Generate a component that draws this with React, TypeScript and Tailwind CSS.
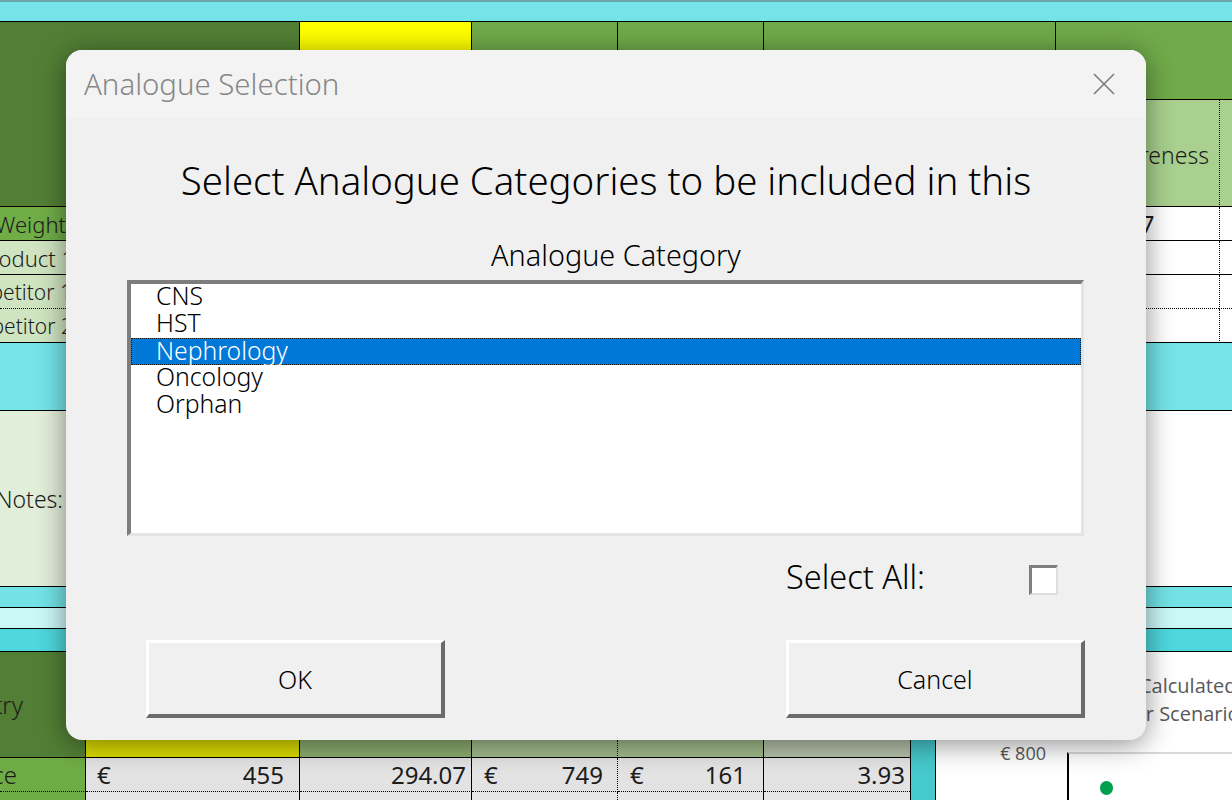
import React from "react";

type CellProps = { className: string; children?: React.ReactNode };

// One spreadsheet cell placed on the sheet grid
function Cell({ className, children }: CellProps) {
  return (
    <div className={"flex items-center overflow-hidden whitespace-nowrap " + className}>
      {children}
    </div>
  );
}

function Sheet() {
  return (
    <div className="grid h-[800px] w-[1232px] grid-cols-[86px_214px_172px_146px_146px_146px_26px_120px_163px_13px] grid-rows-[22px_78px_107px_34px_34px_34px_34px_68px_176px_21px_21px_23px_88px_18px_34px_8px] overflow-hidden text-[24px] leading-[28px] text-[#1c1c1c]">
      {/* top band */}
      <Cell className="col-start-1 col-end-11 row-start-1 row-end-2 border-t-2 border-b border-t-[#6aa6aa] border-b-black bg-[#74e4e8]" />

      {/* header rows */}
      <Cell className="col-start-1 col-end-3 row-start-2 row-end-4 border-r border-b border-black bg-[#527f35]" />
      <Cell className="col-start-3 col-end-4 row-start-2 row-end-3 border-r border-black bg-[#ffff00]" />
      <Cell className="col-start-4 col-end-5 row-start-2 row-end-3 border-r border-black bg-[#70aa4a]" />
      <Cell className="col-start-5 col-end-6 row-start-2 row-end-3 border-r border-black bg-[#70aa4a]" />
      <Cell className="col-start-6 col-end-9 row-start-2 row-end-3 border-r border-black bg-[#70aa4a]" />
      <Cell className="col-start-9 col-end-11 row-start-2 row-end-3 border-b border-black bg-[#70aa4a]" />
      <Cell className="col-start-3 col-end-9 row-start-3 row-end-4 border-b border-black bg-[#a9d08e]" />
      <Cell className="col-start-9 col-end-10 row-start-3 row-end-4 justify-end border-b border-black bg-[#a9d08e] pt-[4px] pr-[10px] text-[23px] font-light">
        Awareness
      </Cell>
      <Cell className="col-start-10 col-end-11 row-start-3 row-end-4 border-b border-l border-black bg-[#a9d08e] [border-left-style:dotted]" />

      {/* weight rows */}
      <Cell className="col-start-1 col-end-2 row-start-4 row-end-5 justify-end border-r border-b border-black bg-[#70ad47] pr-[19px] text-[22px] font-light">
        Weight
      </Cell>
      <Cell className="col-start-2 col-end-9 row-start-4 row-end-5 border-b border-black bg-white" />
      <Cell className="col-start-9 col-end-10 row-start-4 row-end-5 justify-center border-b border-black bg-white">
        0.7
      </Cell>
      <Cell className="col-start-10 col-end-11 row-start-4 row-end-5 border-b border-l border-black bg-white [border-left-style:dotted]" />

      <Cell className="col-start-1 col-end-2 row-start-5 row-end-6 justify-end border-r border-b border-black bg-[#cfe4c1] pr-[11px] text-[22px] font-light">
        Product 1
      </Cell>
      <Cell className="col-start-2 col-end-10 row-start-5 row-end-6 border-b border-black bg-white" />
      <Cell className="col-start-10 col-end-11 row-start-5 row-end-6 border-b border-l border-black bg-white [border-left-style:dotted]" />

      <Cell className="col-start-1 col-end-2 row-start-6 row-end-7 justify-end border-r border-b border-black bg-[#cfe4c1] pr-[13px] text-[21px] font-light [border-bottom-style:dotted]">
        Competitor 1
      </Cell>
      <Cell className="col-start-2 col-end-10 row-start-6 row-end-7 border-b border-dotted border-black bg-white" />
      <Cell className="col-start-10 col-end-11 row-start-6 row-end-7 border-b border-l border-dotted border-black bg-white" />

      <Cell className="col-start-1 col-end-2 row-start-7 row-end-8 justify-end border-r border-b border-black bg-[#cfe4c1] pr-[12px] text-[21px] font-light">
        Competitor 2
      </Cell>
      <Cell className="col-start-2 col-end-10 row-start-7 row-end-8 border-b border-black bg-white" />
      <Cell className="col-start-10 col-end-11 row-start-7 row-end-8 border-b border-l border-black bg-white [border-left-style:dotted]" />

      {/* separator and notes */}
      <Cell className="col-start-1 col-end-11 row-start-8 row-end-9 border-b border-black bg-[#74e4e8]" />
      <Cell className="col-start-1 col-end-2 row-start-9 row-end-10 justify-end border-r border-b border-black bg-[#e1eed9] pr-[22px] text-[23px] font-light">
        Notes:
      </Cell>
      <Cell className="col-start-2 col-end-11 row-start-9 row-end-10 border-b border-black bg-white" />
      <Cell className="col-start-1 col-end-11 row-start-10 row-end-11 border-b border-black bg-[#72e2e6]" />
      <Cell className="col-start-1 col-end-11 row-start-11 row-end-12 border-b border-black bg-[#cbf7f7]" />
      <Cell className="col-start-1 col-end-11 row-start-12 row-end-13 border-b border-black bg-[#4ed7dc]" />

      {/* price table */}
      <Cell className="col-start-1 col-end-2 row-start-13 row-end-15 justify-end border-r border-b border-black bg-[#527f35] pr-[62px] font-light">
        Country
      </Cell>
      <Cell className="col-start-2 col-end-7 row-start-13 row-end-14 bg-[#f2f2f2]" />
      <Cell className="col-start-7 col-end-8 row-start-13 row-end-17 border-r border-l border-black bg-[#46c9cd]" />

      <Cell className="col-start-2 col-end-3 row-start-14 row-end-15 border-r border-b border-black bg-[#dcdc00]" />
      <Cell className="col-start-3 col-end-4 row-start-14 row-end-15 border-r border-b border-black bg-[#8cad6f]" />
      <Cell className="col-start-4 col-end-5 row-start-14 row-end-15 border-r border-b border-black bg-[#a2bc8d] [border-right-style:dotted]" />
      <Cell className="col-start-5 col-end-6 row-start-14 row-end-15 border-r border-b border-black bg-[#a2bc8d]" />
      <Cell className="col-start-6 col-end-7 row-start-14 row-end-15 border-b border-black bg-[#b7c3ab]" />

      <Cell className="col-start-1 col-end-2 row-start-15 row-end-16 justify-end border-r border-b border-black bg-[#6fac46] pr-[68px] font-light [border-bottom-style:dotted]">
        Price
      </Cell>
      <Cell className="col-start-2 col-end-3 row-start-15 row-end-16 justify-between border-r border-b border-black bg-[#e3e3e3] pr-[15px] pl-[11px] [border-bottom-style:dotted]">
        <span>€</span>
        <span>455</span>
      </Cell>
      <Cell className="col-start-3 col-end-4 row-start-15 row-end-16 justify-end border-r border-b border-black bg-[#e3e3e3] pr-[5px] [border-bottom-style:dotted]">
        294.07
      </Cell>
      <Cell className="col-start-4 col-end-5 row-start-15 row-end-16 justify-between border-r border-b border-dotted border-black bg-[#e3e3e3] pr-[14px] pl-[12px]">
        <span>€</span>
        <span>749</span>
      </Cell>
      <Cell className="col-start-5 col-end-6 row-start-15 row-end-16 justify-between border-r border-b border-black bg-[#e3e3e3] pr-[17px] pl-[12px] [border-bottom-style:dotted]">
        <span>€</span>
        <span>161</span>
      </Cell>
      <Cell className="col-start-6 col-end-7 row-start-15 row-end-16 justify-end border-b border-black bg-[#e3e3e3] pr-[5px] [border-bottom-style:dotted]">
        3.93
      </Cell>

      <Cell className="col-start-1 col-end-2 row-start-16 row-end-17 border-r border-black bg-[#6fac46]" />
      <Cell className="col-start-2 col-end-3 row-start-16 row-end-17 border-r border-black bg-[#e6e6e6]" />
      <Cell className="col-start-3 col-end-4 row-start-16 row-end-17 border-r border-black bg-[#e6e6e6]" />
      <Cell className="col-start-4 col-end-5 row-start-16 row-end-17 border-r border-dotted border-black bg-[#e6e6e6]" />
      <Cell className="col-start-5 col-end-6 row-start-16 row-end-17 border-r border-black bg-[#e6e6e6]" />
      <Cell className="col-start-6 col-end-7 row-start-16 row-end-17 bg-[#e6e6e6]" />

      {/* embedded chart */}
      <div className="col-start-8 col-end-11 row-start-13 row-end-17 flex flex-col overflow-hidden bg-white font-['Open_Sans',sans-serif] text-[#595959]">
        <div className="pt-[20px] text-[20px] leading-[28px] whitespace-nowrap">
          <div className="pl-[203px]">Calculated</div>
          <div className="pl-[191px]">for Scenario</div>
        </div>
        <div className="mt-[14px] flex flex-1">
          <div className="w-[131px] pr-[21px] text-right text-[18px] leading-[22px]">€ 800</div>
          <div className="relative mt-[10px] flex-1 border-t-2 border-l-2 border-t-[#d9d9d9] border-l-black">
            <div className="absolute top-[27px] left-[31px] h-[14px] w-[13px] rounded-full bg-[#00a04f]" />
          </div>
        </div>
      </div>
    </div>
  );
}

const categories = ["CNS", "HST", "Nephrology", "Oncology", "Orphan"];

function Dialog() {
  return (
    <div className="absolute top-[50px] left-[66px] flex h-[690px] w-[1080px] flex-col overflow-hidden rounded-[16px] bg-[#f0f0f0] font-light text-black shadow-[0_4px_28px_rgba(0,0,0,0.45)]">
      {/* title bar */}
      <div className="flex h-[68px] shrink-0 items-center justify-between bg-[#f3f3f3] pr-[31px] pl-[18px]">
        <span className="text-[29.4px] leading-[34px] text-[#878787]">Analogue Selection</span>
        <svg width="22" height="22" viewBox="0 0 22 22" fill="none">
          <path d="M1 1L21 21M21 1L1 21" stroke="#7b7b7b" strokeWidth="1.6" />
        </svg>
      </div>

      <div className="flex flex-1 flex-col">
        <div className="mt-[39px] h-[46px] text-center text-[38.4px] leading-[46px] whitespace-nowrap">
          Select Analogue Categories to be included in this
        </div>
        <div className="mt-[36px] h-[32px] pl-[20px] text-center text-[28.8px] leading-[32px]">Analogue Category</div>

        {/* list box */}
        <div className="mt-[9px] mr-[62px] ml-[61px] h-[256px] border-t-4 border-r-[3px] border-b-[3px] border-l-4 border-t-[#7d7d7d] border-r-[#e4e4e4] border-b-[#e4e4e4] border-l-[#7d7d7d] bg-white">
          {categories.map((c) =>
            c === "Nephrology" ? (
              <div
                key={c}
                className="h-[27px] border border-dotted border-[#1b1b1b] bg-[#0078d7] pl-[24px] text-[24.75px] leading-[23px] text-white"
              >
                {c}
              </div>
            ) : (
              <div key={c} className="h-[27px] pl-[25px] text-[24.75px] leading-[24px]">
                {c}
              </div>
            )
          )}
        </div>

        {/* select all */}
        <div className="mt-[26px] flex h-[36px] items-start pl-[720px]">
          <span className="w-[243px] text-[32.5px] leading-[30px]">Select All:</span>
          <span className="mt-[3px] h-[30px] w-[29px] border-t-[3px] border-r-2 border-b-2 border-l-[3px] border-t-[#7f7f7f] border-r-[#dedede] border-b-[#dedede] border-l-[#7f7f7f] bg-white" />
        </div>

        {/* buttons */}
        <div className="mt-[42px] flex justify-between pr-[61px] pl-[80px]">
          <div className="flex h-[78px] w-[299px] items-center justify-center border-t-[3px] border-r-4 border-b-4 border-l-[3px] border-t-white border-r-[#6b6b6b] border-b-[#6b6b6b] border-l-white bg-[#f0f0f0] text-[25px] leading-[24px]">
            OK
          </div>
          <div className="flex h-[78px] w-[299px] items-center justify-center border-t-[3px] border-r-4 border-b-4 border-l-[3px] border-t-white border-r-[#6b6b6b] border-b-[#6b6b6b] border-l-white bg-[#f0f0f0] text-[25px] leading-[24px]">
            Cancel
          </div>
        </div>
      </div>
    </div>
  );
}

export default function App() {
  return (
    <div className="relative h-[800px] w-[1232px] overflow-hidden bg-white font-['Noto_Sans','Liberation_Sans',sans-serif]">
      <Sheet />
      <Dialog />
    </div>
  );
}
